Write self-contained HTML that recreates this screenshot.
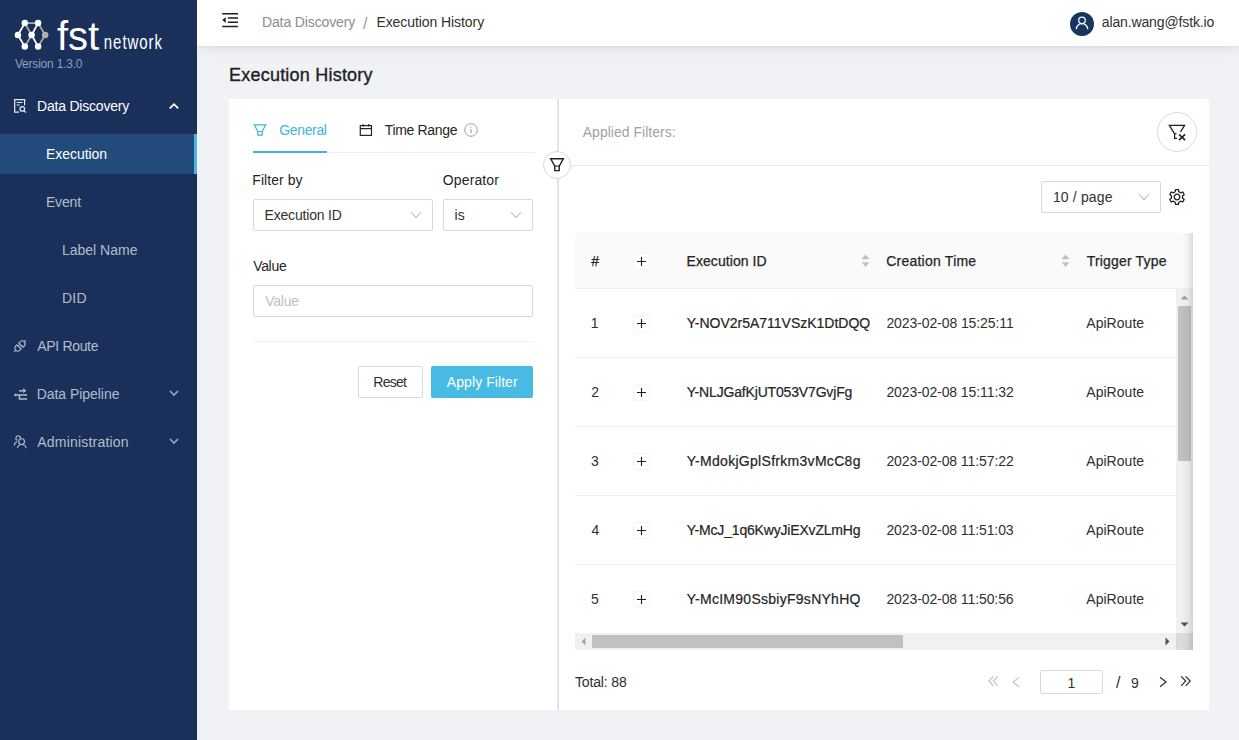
<!DOCTYPE html>
<html lang="en">
<head>
<meta charset="utf-8">
<title>Execution History</title>
<style>
*{box-sizing:border-box;margin:0;padding:0}
html,body{width:1239px;height:740px;overflow:hidden;background:#f0f2f5;font-family:"Liberation Sans",sans-serif;}
.abs{position:absolute}
.t{position:absolute;white-space:nowrap;line-height:20px;height:20px;font-family:"Liberation Sans",sans-serif;}
#side{position:absolute;left:0;top:0;width:197px;height:740px;background:#1a305b;}
#sel{position:absolute;left:0;top:134px;width:197px;height:40px;background:#224b7c;border-right:3px solid #4ab8e6;}
#hdr{position:absolute;left:197px;top:0;width:1042px;height:46px;background:#fff;box-shadow:0 1px 4px rgba(0,21,41,.05),0 2px 16px rgba(0,21,41,.07);}
#card{position:absolute;left:229px;top:99px;width:980px;height:611px;background:#fff;}
.box{position:absolute;border:1px solid #d9d9d9;border-radius:2px;background:#fff;}
.line{position:absolute;background:#f0f0f0;}
svg{position:absolute;overflow:visible}
.logo1{position:absolute;white-space:nowrap;color:#fff;font-family:"Liberation Sans",sans-serif;transform-origin:0 100%;}
</style>
</head>
<body>
<!-- header bar -->
<div id="hdr"></div>
<!-- sidebar -->
<div id="side"></div>
<div id="sel"></div>
<!-- logo mark -->
<svg style="left:0;top:0" width="60" height="60" viewBox="0 0 60 60">
 <g stroke="#b1afad" stroke-width="1.7" fill="none">
  <path d="M24.8 23.1H38.1M24.8 23.1L31.6 35M31.6 35L24.8 46.6M38.1 23.1L45.2 35L38.1 46.6"/>
 </g>
 <g stroke="#fff" stroke-width="1.8" fill="none">
  <path d="M17.9 35L24.8 23.1M17.9 35L24.8 46.6M38.1 23.1L31.6 35L38.1 46.6"/>
 </g>
 <circle cx="45.2" cy="35" r="3.25" fill="#b1afad"/>
 <g fill="#fff">
  <circle cx="24.8" cy="23.1" r="3.25"/><circle cx="38.1" cy="23.1" r="3.25"/>
  <circle cx="17.9" cy="35" r="3.25"/><circle cx="31.6" cy="35" r="3.25"/>
  <circle cx="24.8" cy="46.6" r="3.25"/><circle cx="38.1" cy="46.6" r="3.25"/>
 </g>
</svg>
<span class="logo1" id="lg1" style="left:57px;top:12.6px;font-size:40px;line-height:46px;">fst</span>
<span class="logo1" id="lg2" style="left:103.8px;top:33.6px;font-size:15px;line-height:24px;letter-spacing:0.95px;transform:scaleY(1.3);">network</span>

<!-- sidebar icons -->
<!-- file-search -->
<svg style="left:13px;top:98px" width="16" height="16" viewBox="0 0 16 16" fill="none" stroke="#e8ecf3" stroke-width="1.2">
 <path d="M11.6 7.2V1.7H1.7V14.2H6"/>
 <path d="M3.6 4.5H9.6M3.6 7H6.6" stroke-width="1.1"/>
 <circle cx="9.3" cy="10.9" r="2.3"/>
 <path d="M11 12.6L13 14.6"/>
</svg>
<!-- api -->
<svg style="left:13px;top:339px" width="14" height="14" viewBox="0 0 14 14" fill="none" stroke="#b3bccb" stroke-width="1.15">
 <g transform="rotate(-45 7 7) translate(7 7) scale(0.93) translate(-7 -7)">
  <path d="M-2 7H0.6M13.4 7H16"/>
  <path d="M5.6 3.8H3.8A3.2 3.2 0 0 0 3.8 10.2H5.6Z"/>
  <path d="M8.4 3.8H10.2A3.2 3.2 0 0 1 10.2 10.2H8.4Z"/>
  <path d="M5.6 5.7H8.4M5.6 8.3H8.4" stroke-width="0.9"/>
 </g>
</svg>
<!-- pipeline -->
<svg style="left:13px;top:387px" width="16" height="14" viewBox="0 0 16 14" fill="none" stroke="#b3bccb" stroke-width="1.5">
 <path d="M6 3.8H10.4"/>
 <path d="M10.2 1.1L13.3 3.8L10.2 6.3Z" fill="#b3bccb" stroke="none"/>
 <path d="M3 8H14.1"/>
 <path d="M3.2 6.2L0.7 8L3.2 9.8Z" fill="#b3bccb" stroke="none"/>
 <path d="M6.4 8V11.9H14.1"/>
</svg>
<!-- team -->
<svg style="left:13px;top:435px" width="15" height="14" viewBox="0 0 15 14" fill="none" stroke="#b3bccb" stroke-width="1.15">
 <circle cx="8.6" cy="6.6" r="2.9"/>
 <path d="M4.4 13.2A4.4 4.4 0 0 1 13.1 13.2"/>
 <path d="M7.4 3.8A2.3 2.3 0 1 0 4.2 5.3"/>
 <path d="M1.3 10.5A4 4 0 0 1 4.3 6.8"/>
</svg>
<!-- carets -->
<svg style="left:168px;top:101px" width="12" height="10" viewBox="0 0 12 10" fill="none" stroke="#fff" stroke-width="1.8"><path d="M1.8 7.3L6 3.2L10.2 7.3"/></svg>
<svg style="left:168px;top:388px" width="12" height="10" viewBox="0 0 12 10" fill="none" stroke="#98a4bb" stroke-width="1.7"><path d="M2 3L6 7L10 3"/></svg>
<svg style="left:168px;top:436px" width="12" height="10" viewBox="0 0 12 10" fill="none" stroke="#98a4bb" stroke-width="1.7"><path d="M2 3L6 7L10 3"/></svg>

<!-- header -->
<svg style="left:221px;top:12px" width="18" height="16" viewBox="0 0 18 16" fill="none" stroke="#1f1f1f" stroke-width="1.5">
 <path d="M1.2 1.8H17M6.8 6H17M6.8 10.3H17M1.2 14.5H17"/>
 <path d="M1.2 8.1L4.7 5.3V10.9Z" fill="#1f1f1f" stroke="none"/>
</svg>
<!-- avatar -->
<svg style="left:1070px;top:12px" width="24" height="24" viewBox="0 0 24 24">
 <circle cx="12" cy="12" r="12" fill="#17365f"/>
 <circle cx="12" cy="8.3" r="3.3" fill="none" stroke="#fff" stroke-width="1.25"/>
 <path d="M6.3 17.3A5.7 5.7 0 0 1 17.7 17.3" fill="none" stroke="#fff" stroke-width="1.25"/>
</svg>

<!-- card -->
<div id="card"></div>
<!-- tabs -->
<div class="line" style="left:253px;top:152px;width:282px;height:1px"></div>
<div class="abs" style="left:253px;top:151px;width:74px;height:2px;background:#3fb3e2"></div>
<svg style="left:253px;top:123px" width="14" height="14" viewBox="0 0 14 14" fill="none" stroke="#3fb3e2" stroke-width="1.2">
 <path d="M1.2 1.8H12.8L9.2 8.3V12.2H4.8V8.3Z"/><path d="M4.8 8.6H9.2" stroke-width="1"/>
</svg>
<svg style="left:359px;top:123px" width="14" height="14" viewBox="0 0 14 14" fill="none" stroke="#262626" stroke-width="1.2">
 <rect x="1.3" y="2.6" width="11.2" height="9.8"/><path d="M1.3 5.6H12.5M4.2 1V3.6M9.6 1V3.6"/>
</svg>
<svg style="left:464px;top:123px" width="14" height="14" viewBox="0 0 14 14" fill="none" stroke="#9aa3b3" stroke-width="1">
 <circle cx="7" cy="7" r="6.3"/><path d="M7 6.2V10.2" stroke-width="1.2"/><circle cx="7" cy="4.1" r="0.7" fill="#9aa3b3" stroke="none"/>
</svg>
<!-- form -->
<div class="box" style="left:253px;top:199px;width:180px;height:32px"></div>
<div class="box" style="left:443px;top:199px;width:90px;height:32px"></div>
<svg style="left:410px;top:210px" width="12" height="10" viewBox="0 0 12 10" fill="none" stroke="#bfbfbf" stroke-width="1.1"><path d="M1 2L6 7.6L11 2"/></svg>
<svg style="left:510px;top:210px" width="12" height="10" viewBox="0 0 12 10" fill="none" stroke="#bfbfbf" stroke-width="1.1"><path d="M1 2L6 7.6L11 2"/></svg>
<div class="box" style="left:253px;top:285px;width:280px;height:32px"></div>
<div class="line" style="left:253px;top:341px;width:280px;height:1px"></div>
<div class="box" style="left:358px;top:366px;width:65px;height:32px"></div>
<div class="abs" style="left:431px;top:366px;width:102px;height:32px;background:#47bbe3;border-radius:2px"></div>

<!-- splitter -->
<div class="abs" style="left:557px;top:99px;width:2px;height:611px;background:#e3e5ec"></div>
<div class="line" style="left:559px;top:165px;width:650px;height:1px;background:#e8e8e8"></div>
<div class="abs" style="left:543px;top:151px;width:28px;height:28px;border-radius:50%;border:1px solid #d9d9d9;background:#fff"></div>
<svg style="left:549px;top:157px" width="16" height="16" viewBox="0 0 16 16" fill="none" stroke="#1f1f1f" stroke-width="1.4">
 <path d="M1.7 1.8H14.3L10.2 9.1V13.6H5.8V9.1Z"/><path d="M5.8 9.1H10.2" stroke-width="1.1"/>
</svg>
<!-- clear filter button -->
<div class="abs" style="left:1157px;top:112px;width:40px;height:40px;border-radius:50%;border:1px solid #d9d9d9;background:#fff"></div>
<svg style="left:1167px;top:123px" width="20" height="20" viewBox="0 0 20 20" fill="none" stroke="#1f1f1f" stroke-width="1.3">
 <path d="M13.4 9L17.6 2.4H2.4L7.6 11V15.4H10"/>
 <path d="M7.6 10.7H9.6" stroke-width="1.1"/>
 <path d="M12 11.4L18.1 17.1M18.1 11.4L12 17.1" stroke-width="1.5"/>
</svg>
<!-- page size + gear -->
<div class="box" style="left:1041px;top:181px;width:120px;height:32px"></div>
<svg style="left:1138px;top:192px" width="12" height="10" viewBox="0 0 12 10" fill="none" stroke="#bfbfbf" stroke-width="1.1"><path d="M1 2L6 7.6L11 2"/></svg>
<div class="abs" style="left:1161px;top:181px;width:32px;height:32px;border-radius:50%;box-shadow:0 2px 0 rgba(0,0,0,0.02)"></div>
<svg id="gear" style="left:1168px;top:188px" width="18" height="18" viewBox="-9 -9 18 18" fill="none" stroke="#1f1f1f" stroke-width="1.3" stroke-linejoin="round">
 <circle cx="0" cy="0" r="2.8"/>
 <path d="M-1.82 -5.29L-1.45 -7.46L1.45 -7.46L1.82 -5.29L3.67 -4.23L5.74 -4.99L7.19 -2.47L5.50 -1.07L5.50 1.07L7.19 2.47L5.74 4.99L3.67 4.23L1.82 5.29L1.45 7.46L-1.45 7.46L-1.82 5.29L-3.67 4.23L-5.74 4.99L-7.19 2.47L-5.50 1.07L-5.50 -1.07L-7.19 -2.47L-5.74 -4.99L-3.67 -4.23Z"/>
</svg>

<!-- table -->
<div class="abs" style="left:575px;top:233px;width:618px;height:55px;background:#fafafa"></div>
<div class="line" style="left:575px;top:288px;width:618px;height:1px"></div>
<div class="line" style="left:575px;top:357px;width:601px;height:1px"></div>
<div class="line" style="left:575px;top:426px;width:601px;height:1px"></div>
<div class="line" style="left:575px;top:495px;width:601px;height:1px"></div>
<div class="line" style="left:575px;top:564px;width:601px;height:1px"></div>
<!-- scrollbars -->
<div class="abs" style="left:1176px;top:289px;width:17px;height:344px;background:#f1f1f1"></div>
<div class="abs" style="left:1178px;top:306px;width:13px;height:155px;background:#c1c1c1"></div>
<div class="abs" style="left:575px;top:633px;width:601px;height:17px;background:#f1f1f1"></div>
<div class="abs" style="left:592px;top:635px;width:311px;height:13px;background:#c1c1c1"></div>
<div class="abs" style="left:1176px;top:633px;width:17px;height:17px;background:#dcdcdc"></div>
<svg style="left:1176px;top:289px" width="17" height="17" viewBox="0 0 17 17"><path d="M4.5 10.5L8.5 6.5L12.5 10.5Z" fill="#a3a3a3"/></svg>
<svg style="left:1176px;top:616px" width="17" height="17" viewBox="0 0 17 17"><path d="M4.5 6.5L8.5 10.5L12.5 6.5Z" fill="#505050"/></svg>
<svg style="left:575px;top:633px" width="17" height="17" viewBox="0 0 17 17"><path d="M10.5 4.5L6.5 8.5L10.5 12.5Z" fill="#a3a3a3"/></svg>
<svg style="left:1159px;top:633px" width="17" height="17" viewBox="0 0 17 17"><path d="M6.5 4.5L10.5 8.5L6.5 12.5Z" fill="#505050"/></svg>
<!-- right shadow on table -->
<div class="abs" style="left:1181px;top:233px;width:12px;height:417px;background:linear-gradient(to right,rgba(0,0,0,0),rgba(0,0,0,0.035) 55%,rgba(0,0,0,0.13))"></div>

<!-- sorters -->
<svg style="left:861px;top:253px" width="9" height="16" viewBox="0 0 9 16" fill="#bfbfbf"><path d="M0.6 6.2L4.5 1.6L8.4 6.2ZM0.6 9.3L4.5 13.9L8.4 9.3Z"/></svg>
<svg style="left:1061px;top:253px" width="9" height="16" viewBox="0 0 9 16" fill="#bfbfbf"><path d="M0.6 6.2L4.5 1.6L8.4 6.2ZM0.6 9.3L4.5 13.9L8.4 9.3Z"/></svg>
<!-- expand buttons -->
<div class="abs" style="left:633px;top:253px;width:17px;height:17px;border:1px solid #f4f4f4;border-radius:3px;background:#fff"></div><svg style="left:633px;top:253px" width="17" height="17" viewBox="0 0 17 17" stroke="#1f1f1f" stroke-width="1.15"><path d="M4 8.5H13M8.5 4V13"/></svg>
<div class="abs" style="left:633px;top:315px;width:17px;height:17px;border:1px solid #f4f4f4;border-radius:3px;background:#fff"></div><svg style="left:633px;top:315px" width="17" height="17" viewBox="0 0 17 17" stroke="#1f1f1f" stroke-width="1.15"><path d="M4 8.5H13M8.5 4V13"/></svg>
<div class="abs" style="left:633px;top:384px;width:17px;height:17px;border:1px solid #f4f4f4;border-radius:3px;background:#fff"></div><svg style="left:633px;top:384px" width="17" height="17" viewBox="0 0 17 17" stroke="#1f1f1f" stroke-width="1.15"><path d="M4 8.5H13M8.5 4V13"/></svg>
<div class="abs" style="left:633px;top:453px;width:17px;height:17px;border:1px solid #f4f4f4;border-radius:3px;background:#fff"></div><svg style="left:633px;top:453px" width="17" height="17" viewBox="0 0 17 17" stroke="#1f1f1f" stroke-width="1.15"><path d="M4 8.5H13M8.5 4V13"/></svg>
<div class="abs" style="left:633px;top:522px;width:17px;height:17px;border:1px solid #f4f4f4;border-radius:3px;background:#fff"></div><svg style="left:633px;top:522px" width="17" height="17" viewBox="0 0 17 17" stroke="#1f1f1f" stroke-width="1.15"><path d="M4 8.5H13M8.5 4V13"/></svg>
<div class="abs" style="left:633px;top:591px;width:17px;height:17px;border:1px solid #f4f4f4;border-radius:3px;background:#fff"></div><svg style="left:633px;top:591px" width="17" height="17" viewBox="0 0 17 17" stroke="#1f1f1f" stroke-width="1.15"><path d="M4 8.5H13M8.5 4V13"/></svg>

<!-- pagination -->
<div class="box" style="left:1040px;top:670px;width:63px;height:24px"></div>
<svg style="left:986px;top:674px" width="14" height="14" viewBox="0 0 14 14" fill="none" stroke="#bfbfbf" stroke-width="1.1"><path d="M7.3 2.3L2.8 7L7.3 11.8M11.8 2.3L7.3 7L11.8 11.8"/></svg>
<svg style="left:1009px;top:675px" width="14" height="14" viewBox="0 0 14 14" fill="none" stroke="#bfbfbf" stroke-width="1.1"><path d="M10 2.3L4 7L10 11.8"/></svg>
<svg style="left:1156px;top:675px" width="14" height="14" viewBox="0 0 14 14" fill="none" stroke="#303030" stroke-width="1.2"><path d="M4 2.3L10 7L4 11.8"/></svg>
<svg style="left:1179px;top:674px" width="14" height="14" viewBox="0 0 14 14" fill="none" stroke="#303030" stroke-width="1.2"><path d="M2.2 2.3L6.7 7L2.2 11.8M6.7 2.3L11.2 7L6.7 11.8"/></svg>

<!-- texts -->
<span class="t" id="ver" style="left:14.99px;top:53.50px;font-size:12px;color:#8d9fbc;letter-spacing:-0.208px;">Version 1.3.0</span>
<span class="t" id="m1" style="left:37.07px;top:96.00px;font-size:14px;color:#ffffff;letter-spacing:-0.212px;">Data Discovery</span>
<span class="t" id="m2" style="left:45.98px;top:144.00px;font-size:14px;color:#ffffff;letter-spacing:-0.039px;">Execution</span>
<span class="t" id="m3" style="left:45.98px;top:192.00px;font-size:14px;color:#b3bccb;letter-spacing:-0.184px;">Event</span>
<span class="t" id="m4" style="left:61.98px;top:240.00px;font-size:14px;color:#b3bccb;letter-spacing:-0.002px;">Label Name</span>
<span class="t" id="m5" style="left:61.98px;top:288.00px;font-size:14px;color:#b3bccb;letter-spacing:0.285px;">DID</span>
<span class="t" id="m6" style="left:37.25px;top:336.00px;font-size:14px;color:#b3bccb;letter-spacing:-0.325px;">API Route</span>
<span class="t" id="m7" style="left:36.69px;top:384.00px;font-size:14px;color:#b3bccb;letter-spacing:-0.044px;">Data Pipeline</span>
<span class="t" id="m8" style="left:37.25px;top:432.00px;font-size:14px;color:#b3bccb;letter-spacing:0.201px;">Administration</span>
<span class="t" id="b1" style="left:261.98px;top:12.00px;font-size:14px;color:#8c8c8c;letter-spacing:-0.122px;">Data Discovery</span>
<span class="t" id="b2" style="left:363.10px;top:13.60px;font-size:16px;color:#9a9a9a;letter-spacing:0.000px;">/</span>
<span class="t" id="b3" style="left:376.43px;top:12.00px;font-size:14px;color:#303030;letter-spacing:-0.076px;">Execution History</span>
<span class="t" id="em" style="left:1101.77px;top:12.00px;font-size:14px;color:#303030;letter-spacing:-0.128px;">alan.wang@fstk.io</span>
<span class="t" id="ttl" style="left:229.02px;top:65.00px;font-size:18px;color:#222222;letter-spacing:0.218px;-webkit-text-stroke:0.35px #222;">Execution History</span>
<span class="t" id="tab1" style="left:279.29px;top:120.00px;font-size:14px;color:#3fb3e2;letter-spacing:-0.357px;">General</span>
<span class="t" id="tab2" style="left:384.74px;top:120.00px;font-size:14px;color:#262626;letter-spacing:-0.327px;">Time Range</span>
<span class="t" id="l1" style="left:252.33px;top:170.00px;font-size:14px;color:#262626;letter-spacing:0.049px;">Filter by</span>
<span class="t" id="l2" style="left:442.80px;top:170.00px;font-size:14px;color:#262626;letter-spacing:0.123px;">Operator</span>
<span class="t" id="s1" style="left:264.50px;top:205.00px;font-size:14px;color:#303030;letter-spacing:-0.175px;">Execution ID</span>
<span class="t" id="s2" style="left:454.47px;top:205.00px;font-size:14px;color:#303030;letter-spacing:0.127px;">is</span>
<span class="t" id="l3" style="left:253.15px;top:256.00px;font-size:14px;color:#262626;letter-spacing:-0.304px;">Value</span>
<span class="t" id="ph" style="left:265.33px;top:291.00px;font-size:14px;color:#bfbfbf;letter-spacing:-0.291px;">Value</span>
<span class="t" id="rst" style="left:373.33px;top:372.00px;font-size:14px;color:#303030;letter-spacing:-0.723px;">Reset</span>
<span class="t" id="apl" style="left:446.85px;top:372.00px;font-size:14px;color:#ffffff;letter-spacing:0.070px;">Apply Filter</span>
<span class="t" id="af" style="left:582.74px;top:122.00px;font-size:14px;color:#9fa2aa;letter-spacing:0.015px;">Applied Filters:</span>
<span class="t" id="pg" style="left:1052.90px;top:187.00px;font-size:14px;color:#303030;letter-spacing:0.149px;">10 / page</span>
<span class="t" id="h0" style="left:591.25px;top:251.00px;font-size:14px;color:#262626;letter-spacing:0.000px;-webkit-text-stroke:0.25px #262626;">#</span>
<span class="t" id="h1" style="left:686.52px;top:251.00px;font-size:14px;color:#262626;letter-spacing:0.072px;-webkit-text-stroke:0.25px #262626;">Execution ID</span>
<span class="t" id="h2" style="left:886.21px;top:251.00px;font-size:14px;color:#262626;letter-spacing:0.234px;-webkit-text-stroke:0.25px #262626;">Creation Time</span>
<span class="t" id="h3" style="left:1086.72px;top:251.00px;font-size:14px;color:#262626;letter-spacing:0.171px;-webkit-text-stroke:0.25px #262626;">Trigger Type</span>
<span class="t" id="r0n" style="left:590.71px;top:313.00px;font-size:14px;color:#303030;letter-spacing:0.000px;">1</span>
<span class="t" id="r0e" style="left:686.73px;top:313.00px;font-size:14px;color:#262626;letter-spacing:-0.009px;-webkit-text-stroke:0.22px #262626;">Y-NOV2r5A711VSzK1DtDQQ</span>
<span class="t" id="r0t" style="left:886.38px;top:313.00px;font-size:14px;color:#303030;letter-spacing:-0.091px;">2023-02-08 15:25:11</span>
<span class="t" id="r0a" style="left:1086.29px;top:313.00px;font-size:14px;color:#303030;letter-spacing:0.036px;">ApiRoute</span>
<span class="t" id="r1n" style="left:591.13px;top:382.00px;font-size:14px;color:#303030;letter-spacing:0.000px;">2</span>
<span class="t" id="r1e" style="left:686.73px;top:382.00px;font-size:14px;color:#262626;letter-spacing:-0.167px;-webkit-text-stroke:0.22px #262626;">Y-NLJGafKjUT053V7GvjFg</span>
<span class="t" id="r1t" style="left:886.38px;top:382.00px;font-size:14px;color:#303030;letter-spacing:-0.092px;">2023-02-08 15:11:32</span>
<span class="t" id="r1a" style="left:1086.29px;top:382.00px;font-size:14px;color:#303030;letter-spacing:0.036px;">ApiRoute</span>
<span class="t" id="r2n" style="left:591.12px;top:451.00px;font-size:14px;color:#303030;letter-spacing:0.000px;">3</span>
<span class="t" id="r2e" style="left:686.73px;top:451.00px;font-size:14px;color:#262626;letter-spacing:0.294px;-webkit-text-stroke:0.22px #262626;">Y-MdokjGplSfrkm3vMcC8g</span>
<span class="t" id="r2t" style="left:886.38px;top:451.00px;font-size:14px;color:#303030;letter-spacing:-0.092px;">2023-02-08 11:57:22</span>
<span class="t" id="r2a" style="left:1086.29px;top:451.00px;font-size:14px;color:#303030;letter-spacing:0.036px;">ApiRoute</span>
<span class="t" id="r3n" style="left:591.45px;top:520.00px;font-size:14px;color:#303030;letter-spacing:0.000px;">4</span>
<span class="t" id="r3e" style="left:686.73px;top:520.00px;font-size:14px;color:#262626;letter-spacing:-0.181px;-webkit-text-stroke:0.22px #262626;">Y-McJ_1q6KwyJiEXvZLmHg</span>
<span class="t" id="r3t" style="left:886.38px;top:520.00px;font-size:14px;color:#303030;letter-spacing:-0.095px;">2023-02-08 11:51:03</span>
<span class="t" id="r3a" style="left:1086.29px;top:520.00px;font-size:14px;color:#303030;letter-spacing:0.036px;">ApiRoute</span>
<span class="t" id="r4n" style="left:590.93px;top:589.00px;font-size:14px;color:#303030;letter-spacing:0.000px;">5</span>
<span class="t" id="r4e" style="left:686.73px;top:589.00px;font-size:14px;color:#262626;letter-spacing:0.271px;-webkit-text-stroke:0.22px #262626;">Y-McIM90SsbiyF9sNYhHQ</span>
<span class="t" id="r4t" style="left:886.38px;top:589.00px;font-size:14px;color:#303030;letter-spacing:-0.096px;">2023-02-08 11:50:56</span>
<span class="t" id="r4a" style="left:1086.29px;top:589.00px;font-size:14px;color:#303030;letter-spacing:0.036px;">ApiRoute</span>
<span class="t" id="tot" style="left:574.92px;top:672.00px;font-size:14px;color:#303030;letter-spacing:-0.138px;">Total: 88</span>
<span class="t" id="p1" style="left:1067.50px;top:673.00px;font-size:14px;color:#303030;letter-spacing:0.000px;">1</span>
<span class="t" id="p2" style="left:1115.91px;top:673.00px;font-size:16px;color:#303030;letter-spacing:0.000px;">/</span>
<span class="t" id="p3" style="left:1130.98px;top:673.00px;font-size:14px;color:#303030;letter-spacing:0.000px;">9</span>
</body>
</html>
